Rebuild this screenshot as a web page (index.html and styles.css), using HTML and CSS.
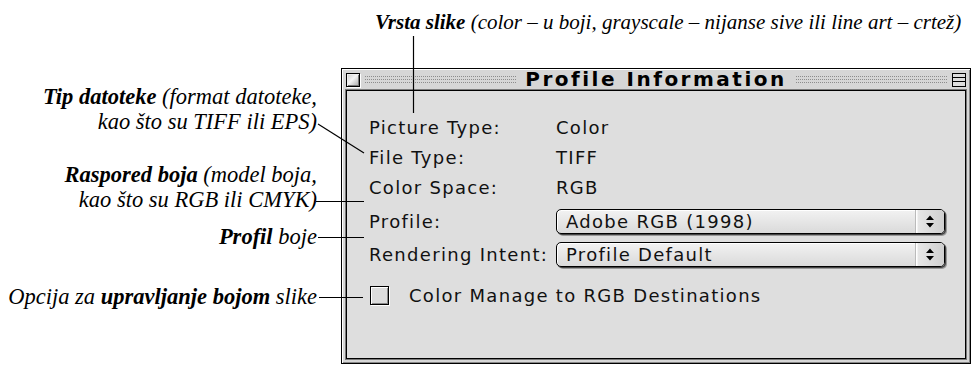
FILE: index.html
```html
<!DOCTYPE html>
<html>
<head>
<meta charset="utf-8">
<link rel="stylesheet" href="styles.css">
</head>
<body>
<div class="page">
  <div class="top-note"><b>Vrsta slike</b> (color – u boji, grayscale – nijanse sive ili line art – crtež)</div>
  <div class="main">
    <div class="notes">
      <div class="note note-tip"><b>Tip datoteke</b> (format datoteke,<br>kao što su TIFF ili EPS)</div>
      <div class="note note-ras"><b>Raspored boja</b> (model boja,<br>kao što su RGB ili CMYK)</div>
      <div class="note note-pro"><b>Profil</b> boje</div>
      <div class="note note-opc">Opcija za <b>upravljanje bojom</b> slike</div>
    </div>
    <div class="window">
      <div class="titlebar">
        <div class="close-box"></div>
        <div class="stripes"></div>
        <div class="title">Profile Information</div>
        <div class="stripes"></div>
        <div class="shade-box"><i></i><i></i></div>
      </div>
      <div class="content">
        <div class="row"><span class="label">Picture Type:</span><span class="value">Color</span></div>
        <div class="row"><span class="label">File Type:</span><span class="value">TIFF</span></div>
        <div class="row"><span class="label">Color Space:</span><span class="value">RGB</span></div>
        <div class="row row-popup row-first-popup"><span class="label">Profile:</span>
          <div class="popup"><span class="popup-text">Adobe RGB (1998)</span><span class="popup-arrows"><svg width="10" height="13" viewBox="0 0 10 13"><path d="M5 0.5 L9 5 H1 Z M5 12.5 L9 8 H1 Z" fill="#000"/></svg></span></div>
        </div>
        <div class="row row-popup"><span class="label">Rendering Intent:</span>
          <div class="popup"><span class="popup-text">Profile Default</span><span class="popup-arrows"><svg width="10" height="13" viewBox="0 0 10 13"><path d="M5 0.5 L9 5 H1 Z M5 12.5 L9 8 H1 Z" fill="#000"/></svg></span></div>
        </div>
        <div class="row row-check"><span class="checkbox"></span><span class="check-label">Color Manage to RGB Destinations</span></div>
      </div>
    </div>
  </div>
  <svg class="leaders" width="973" height="365" viewBox="0 0 973 365">
    <g stroke="#000" stroke-width="1.2" fill="none">
      <line x1="413.5" y1="36" x2="413.5" y2="113"/>
      <line x1="318" y1="124" x2="364" y2="153"/>
      <line x1="316" y1="201.5" x2="364" y2="201.5"/>
      <line x1="318" y1="237.5" x2="364" y2="237.5"/>
      <line x1="319" y1="297.5" x2="363" y2="297.5"/>
    </g>
  </svg>
</div>
</body>
</html>
```
FILE: styles.css
```css
* { box-sizing: border-box; }
html, body { margin: 0; padding: 0; background: #fff; }
.page {
  position: relative;
  width: 973px;
  height: 365px;
  overflow: hidden;
  font-family: "Liberation Serif", "DejaVu Serif", serif;
}
.top-note {
  height: 68px;
  padding: 10px 0 0 375px;
  font-style: italic;
  font-size: 21px;
  line-height: 24px;
  white-space: nowrap;
}
.top-note b, .note b { font-weight: bold; }
.main {
  display: flex;
  align-items: flex-start;
}
.notes {
  width: 317px;
  display: flex;
  flex-direction: column;
  align-items: flex-end;
  text-align: right;
  font-style: italic;
  font-size: 22.5px;
  line-height: 25px;
  white-space: nowrap;
}
.note-tip { margin-top: 16px; }
.note-ras { margin-top: 28px; }
.note-pro { margin-top: 12px; }
.note-opc { margin-top: 35px; }

.window {
  margin-left: 24px;
  width: 630px;
  height: 296px;
  border: 1px solid #000;
  background: #d6d6d6;
  padding: 0 4px 4px 4px;
  display: flex;
  flex-direction: column;
  box-shadow: inset 1px 1px 0 #fff, inset -1px -1px 0 #888;
}
.titlebar {
  height: 21px;
  display: flex;
  align-items: center;
  gap: 5px;
  flex: none;
}
.close-box {
  width: 14px;
  height: 14px;
  border: 1px solid #000;
  background: linear-gradient(135deg, #c8c8c8 0%, #f4f4f4 45%, #a8a8a8 100%);
  box-shadow: inset 1px 1px 0 #eee, inset -1px -1px 0 #777, 1px 1px 0 #fff;
  flex: none;
}
.stripes {
  flex: 1;
  height: 8px;
  background-image: radial-gradient(circle at 0.5px 0.5px, #8c8c8c 0.6px, transparent 0.8px);
  background-size: 2px 3px;
}
.title {
  font-family: "DejaVu Sans", "Liberation Sans", sans-serif;
  font-weight: bold;
  font-size: 20px;
  letter-spacing: 2.5px;
  color: #000;
  padding: 0 4px;
  line-height: 21px;
  white-space: nowrap;
}
.shade-box {
  width: 14px;
  height: 14px;
  border: 1px solid #000;
  background: #ddd;
  display: flex;
  flex-direction: column;
  justify-content: space-evenly;
  flex: none;
}
.shade-box i {
  display: block;
  height: 1px;
  background: #000;
}
.content {
  flex: 1;
  background: #dedede;
  border: 1px solid #000;
  box-shadow: 0 0 0 1px #7a7a7a;
  padding: 21px 0 0 22px;
  font-family: "DejaVu Sans", "Liberation Sans", sans-serif;
  font-size: 18px;
  letter-spacing: 1.3px;
  color: #111;
}
.row {
  display: flex;
  align-items: center;
  height: 30px;
  white-space: nowrap;
}
.label { width: 187px; flex: none; }
.row-popup { height: 26px; }
.row-first-popup { margin-top: 6px; }
.row-popup + .row-popup { margin-top: 7px; }
.popup {
  width: 389px;
  height: 25px;
  border: 1px solid #000;
  border-radius: 5px;
  background: linear-gradient(#f2f2f2, #dadada);
  box-shadow: 1px 1px 0 #444, 2px 2px 0 #999, inset 1px 1px 0 #fff;
  display: flex;
  align-items: center;
  overflow: hidden;
}
.popup-text {
  flex: 1;
  padding-left: 9px;
  line-height: 23px;
}
.popup-arrows {
  width: 29px;
  height: 100%;
  display: flex;
  align-items: center;
  justify-content: center;
  border-left: 1px solid #bbb;
  background: linear-gradient(90deg, #fff 0, #fff 1px, #e6e6e6 2px, #cfcfcf 100%);
}
.row-check {
  height: 26px;
  margin-top: 15px;
}
.checkbox {
  width: 19px;
  height: 19px;
  margin-left: 1px;
  border: 1px solid #000;
  background: #dcdcdc;
  box-shadow: inset 1px 1px 0 #fff, inset -1px -1px 0 #888, 1px 1px 0 #fff;
  flex: none;
}
.check-label { margin-left: 20px; }
.leaders {
  position: absolute;
  left: 0;
  top: 0;
  pointer-events: none;
}
```
